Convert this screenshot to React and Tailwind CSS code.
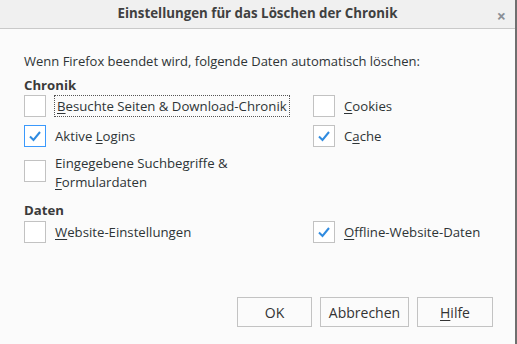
import React from 'react';

const font = { fontFamily: '"Segoe UI", "Open Sans", "Noto Sans", sans-serif' };

function Check({ checked, focused }) {
  return (
    <div
      className={
        'w-[22px] h-[22px] shrink-0 border bg-white flex items-center justify-center ' +
        (focused ? 'border-[#3b99fc]' : 'border-[#c2c2c2]')
      }
    >
      {checked && (
        <svg width="14" height="12" viewBox="0 0 14 12">
          <path d="M2 6.5 L5.5 10 L12 2" fill="none" stroke="#2f8be0" strokeWidth="2" />
        </svg>
      )}
    </div>
  );
}

// label with access key underlined
function Label({ text, k }) {
  const i = text.indexOf(k);
  return (
    <span>
      {text.slice(0, i)}
      <span className="underline underline-offset-2">{k}</span>
      {text.slice(i + 1)}
    </span>
  );
}

function Row({ checked, focused, outline, children }) {
  return (
    <div className="flex items-center gap-[9px]">
      <Check checked={checked} focused={focused} />
      <div className={outline ? 'outline-1 outline-dotted outline-[#555] px-[2px] leading-[20px]' : 'leading-[20px]'}>
        {children}
      </div>
    </div>
  );
}

function Btn({ children, w }) {
  return (
    <button className={'h-[30px] border border-[#c3c3c3] bg-[#fbfbfb] text-[#333] text-[14px] ' + w}>
      {children}
    </button>
  );
}

export default function App() {
  return (
    <div className="w-[517px] h-[344px] flex flex-col bg-[#fbfbfb] border-r-2 border-[#6f6f6f] text-[#2e3436] text-[13.2px]" style={font}>
      <div className="h-[29px] shrink-0 bg-[#f0f0f0] border-b border-[#c9c9c9] flex items-center justify-center relative">
        <span className="font-bold text-[13.3px] text-[#404040]">Einstellungen für das Löschen der Chronik</span>
        <span className="absolute right-[9px] top-[4px] text-[#8a8f96] text-[16px] font-bold">×</span>
      </div>
      <div className="flex-1 flex flex-col pl-[24px] pt-[22px]">
        <div className="leading-[20px] text-[13px]">Wenn Firefox beendet wird, folgende Daten automatisch löschen:</div>
        <div className="font-bold mt-[4px] leading-[20px] text-[#3a3a3a]">Chronik</div>
        <div className="grid grid-cols-[289px_1fr] gap-y-[8px]">
          <Row outline><Label text="Besuchte Seiten & Download-Chronik" k="B" /></Row>
          <Row><Label text="Cookies" k="C" /></Row>
          <Row checked focused><Label text="Aktive Logins" k="L" /></Row>
          <Row checked><Label text="Cache" k="a" /></Row>
          <div className="flex items-start gap-[9px] pt-[5px]">
            <Check />
            <div className="leading-[19px] -mt-[6px]">
              Eingegebene Suchbegriffe &amp;<br />
              <Label text="Formulardaten" k="F" />
            </div>
          </div>
        </div>
        <div className="font-bold mt-[8px] leading-[20px] text-[#3a3a3a]">Daten</div>
        <div className="grid grid-cols-[289px_1fr] mt-[1px]">
          <Row><Label text="Website-Einstellungen" k="W" /></Row>
          <Row checked><Label text="Offline-Website-Daten" k="O" /></Row>
        </div>
        <div className="flex-1" />
        <div className="flex justify-end gap-[8px] pr-[22px] pb-[17px]">
          <Btn w="w-[75px]">OK</Btn>
          <Btn w="w-[89px]">Abbrechen</Btn>
          <Btn w="w-[76px]"><Label text="Hilfe" k="H" /></Btn>
        </div>
      </div>
    </div>
  );
}
